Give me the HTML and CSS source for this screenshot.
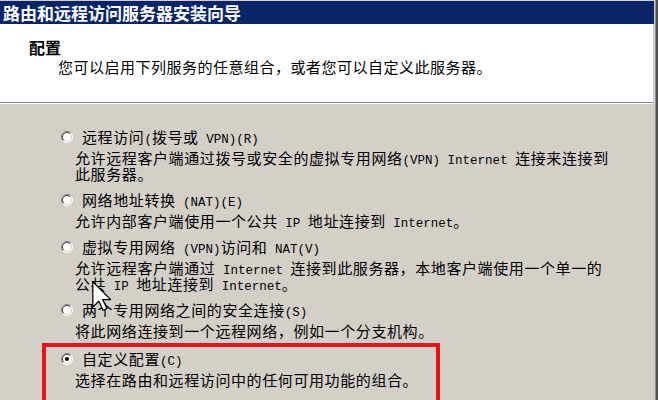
FILE: index.html
```html
<!DOCTYPE html>
<html lang="zh-CN">
<head>
<meta charset="utf-8">
<title>路由和远程访问服务器安装向导</title>
<link rel="stylesheet" href="styles.css">
</head>
<body>
<div class="window">
  <div class="titlebar">路由和远程访问服务器安装向导</div>
  <div class="client">
    <div class="header">
      <div class="h-title">配置</div>
      <div class="h-sub">您可以启用下列服务的任意组合，或者您可以自定义此服务器。</div>
    </div>
    <div class="body">
      <div class="options">
        <div class="opt">
          <div class="opt-head">
            <svg class="radio" width="12" height="12" viewBox="0 0 12 12"><circle cx="6" cy="6" r="5.5" fill="#fff"/><path d="M2.1 9.9A5.5 5.5 0 0 1 9.9 2.1" fill="none" stroke="#808080"/><path d="M9.9 2.1A5.5 5.5 0 0 1 2.1 9.9" fill="none" stroke="#fff"/><path d="M2.8 9.2A4.5 4.5 0 0 1 9.2 2.8" fill="none" stroke="#404040"/><path d="M9.2 2.8A4.5 4.5 0 0 1 2.8 9.2" fill="none" stroke="#d4d0c8"/></svg>
            <span class="label">远程访问<span class="en">(</span>拨号或<span class="en"> VPN)(R)</span></span>
          </div>
          <div class="desc">允许远程客户端通过拨号或安全的虚拟专用网络<span class="en">(VPN) Internet </span>连接来连接到<br>此服务器。</div>
        </div>
        <div class="opt">
          <div class="opt-head">
            <svg class="radio" width="12" height="12" viewBox="0 0 12 12"><circle cx="6" cy="6" r="5.5" fill="#fff"/><path d="M2.1 9.9A5.5 5.5 0 0 1 9.9 2.1" fill="none" stroke="#808080"/><path d="M9.9 2.1A5.5 5.5 0 0 1 2.1 9.9" fill="none" stroke="#fff"/><path d="M2.8 9.2A4.5 4.5 0 0 1 9.2 2.8" fill="none" stroke="#404040"/><path d="M9.2 2.8A4.5 4.5 0 0 1 2.8 9.2" fill="none" stroke="#d4d0c8"/></svg>
            <span class="label">网络地址转换<span class="en"> (NAT)(E)</span></span>
          </div>
          <div class="desc">允许内部客户端使用一个公共<span class="en"> IP </span>地址连接到<span class="en"> Internet</span>。</div>
        </div>
        <div class="opt">
          <div class="opt-head">
            <svg class="radio" width="12" height="12" viewBox="0 0 12 12"><circle cx="6" cy="6" r="5.5" fill="#fff"/><path d="M2.1 9.9A5.5 5.5 0 0 1 9.9 2.1" fill="none" stroke="#808080"/><path d="M9.9 2.1A5.5 5.5 0 0 1 2.1 9.9" fill="none" stroke="#fff"/><path d="M2.8 9.2A4.5 4.5 0 0 1 9.2 2.8" fill="none" stroke="#404040"/><path d="M9.2 2.8A4.5 4.5 0 0 1 2.8 9.2" fill="none" stroke="#d4d0c8"/></svg>
            <span class="label">虚拟专用网络<span class="en"> (VPN)</span>访问和<span class="en"> NAT(V)</span></span>
          </div>
          <div class="desc">允许远程客户端通过<span class="en"> Internet </span>连接到此服务器，本地客户端使用一个单一的<br>公共<span class="en"> IP </span>地址连接到<span class="en"> Internet</span>。</div>
        </div>
        <div class="opt">
          <div class="opt-head">
            <svg class="radio" width="12" height="12" viewBox="0 0 12 12"><circle cx="6" cy="6" r="5.5" fill="#fff"/><path d="M2.1 9.9A5.5 5.5 0 0 1 9.9 2.1" fill="none" stroke="#808080"/><path d="M9.9 2.1A5.5 5.5 0 0 1 2.1 9.9" fill="none" stroke="#fff"/><path d="M2.8 9.2A4.5 4.5 0 0 1 9.2 2.8" fill="none" stroke="#404040"/><path d="M9.2 2.8A4.5 4.5 0 0 1 2.8 9.2" fill="none" stroke="#d4d0c8"/></svg>
            <span class="label">两个专用网络之间的安全连接<span class="en">(S)</span></span>
          </div>
          <div class="desc">将此网络连接到一个远程网络，例如一个分支机构。</div>
        </div>
        <div class="opt opt-selected">
          <div class="highlight"></div>
          <div class="opt-head">
            <svg class="radio" width="12" height="12" viewBox="0 0 12 12"><circle cx="6" cy="6" r="5.5" fill="#fff"/><path d="M2.1 9.9A5.5 5.5 0 0 1 9.9 2.1" fill="none" stroke="#808080"/><path d="M9.9 2.1A5.5 5.5 0 0 1 2.1 9.9" fill="none" stroke="#fff"/><path d="M2.8 9.2A4.5 4.5 0 0 1 9.2 2.8" fill="none" stroke="#404040"/><path d="M9.2 2.8A4.5 4.5 0 0 1 2.8 9.2" fill="none" stroke="#d4d0c8"/><circle cx="6" cy="6" r="2" fill="#000"/></svg>
            <span class="label">自定义配置<span class="en">(C)</span></span>
          </div>
          <div class="desc">选择在路由和远程访问中的任何可用功能的组合。</div>
        </div>
      </div>
    </div>
  </div>
  <svg class="cursor" width="19" height="30" viewBox="0 0 12 19"><path d="M0.5 0.5L0.5 16.5L4.3 12.8L7 18.5L9.4 17.4L6.8 11.8L11.8 11.8Z" fill="#fff" stroke="#000" stroke-width="0.8" stroke-linejoin="miter"/></svg>
</div>
</body>
</html>
```
FILE: styles.css
```css
html, body {
  margin: 0;
  padding: 0;
  background: #d4d0c8;
}

.window {
  position: relative;
  width: 658px;
  height: 400px;
  overflow: hidden;
  box-sizing: border-box;
  padding-top: 1px;
  background: #d4d0c8;
  display: flex;
  flex-direction: column;
  font-family: "Noto Sans CJK SC", sans-serif;
  color: #000;
  box-shadow: inset -2px 0 #505050, inset -3px 0 #909090;
}

.titlebar {
  height: 23px;
  margin-right: 4px;
  background: #0a246a;
  color: #fff;
  font-weight: 700;
  font-size: 17px;
  line-height: 23px;
  padding-left: 3px;
  white-space: nowrap;
}

.client {
  flex: 1;
  margin-right: 5px;
  display: flex;
  flex-direction: column;
}

.header {
  height: 78px;
  background: #fff;
  border-bottom: 1px solid #808080;
  padding-left: 29px;
}

.h-title {
  padding-top: 14px;
  font-weight: 700;
  font-size: 16px;
  line-height: 19px;
}

.h-sub {
  margin-left: 29px;
  font-size: 15px;
  line-height: 20px;
  letter-spacing: 0.5px;
  white-space: nowrap;
}

.body {
  flex: 1;
  border-top: 1px solid #fff;
  padding-top: 23px;
  padding-left: 60px;
}

.options {
  display: flex;
  flex-direction: column;
  gap: 8px;
}

.opt {
  position: relative;
}

.opt-head {
  display: flex;
  align-items: center;
  height: 20px;
}

.radio {
  margin-left: 1px;
  margin-right: 9px;
  flex: none;
}

.label,
.desc {
  font-size: 15px;
  letter-spacing: 0.6px;
  white-space: nowrap;
}

.label {
  line-height: 20px;
}

.desc {
  margin-top: 3px;
  padding-left: 15px;
  line-height: 16px;
}

.en {
  font-family: "Liberation Mono", monospace;
  font-size: 12.5px;
  letter-spacing: 0;
  line-height: 0;
}

.opt-selected {
  margin-top: 2px;
}

.highlight {
  position: absolute;
  left: -18px;
  top: -6px;
  width: 398px;
  height: 70px;
  box-sizing: border-box;
  border: 4px solid #e3121b;
  pointer-events: none;
}

.cursor {
  position: absolute;
  left: 92px;
  top: 281px;
}
```
